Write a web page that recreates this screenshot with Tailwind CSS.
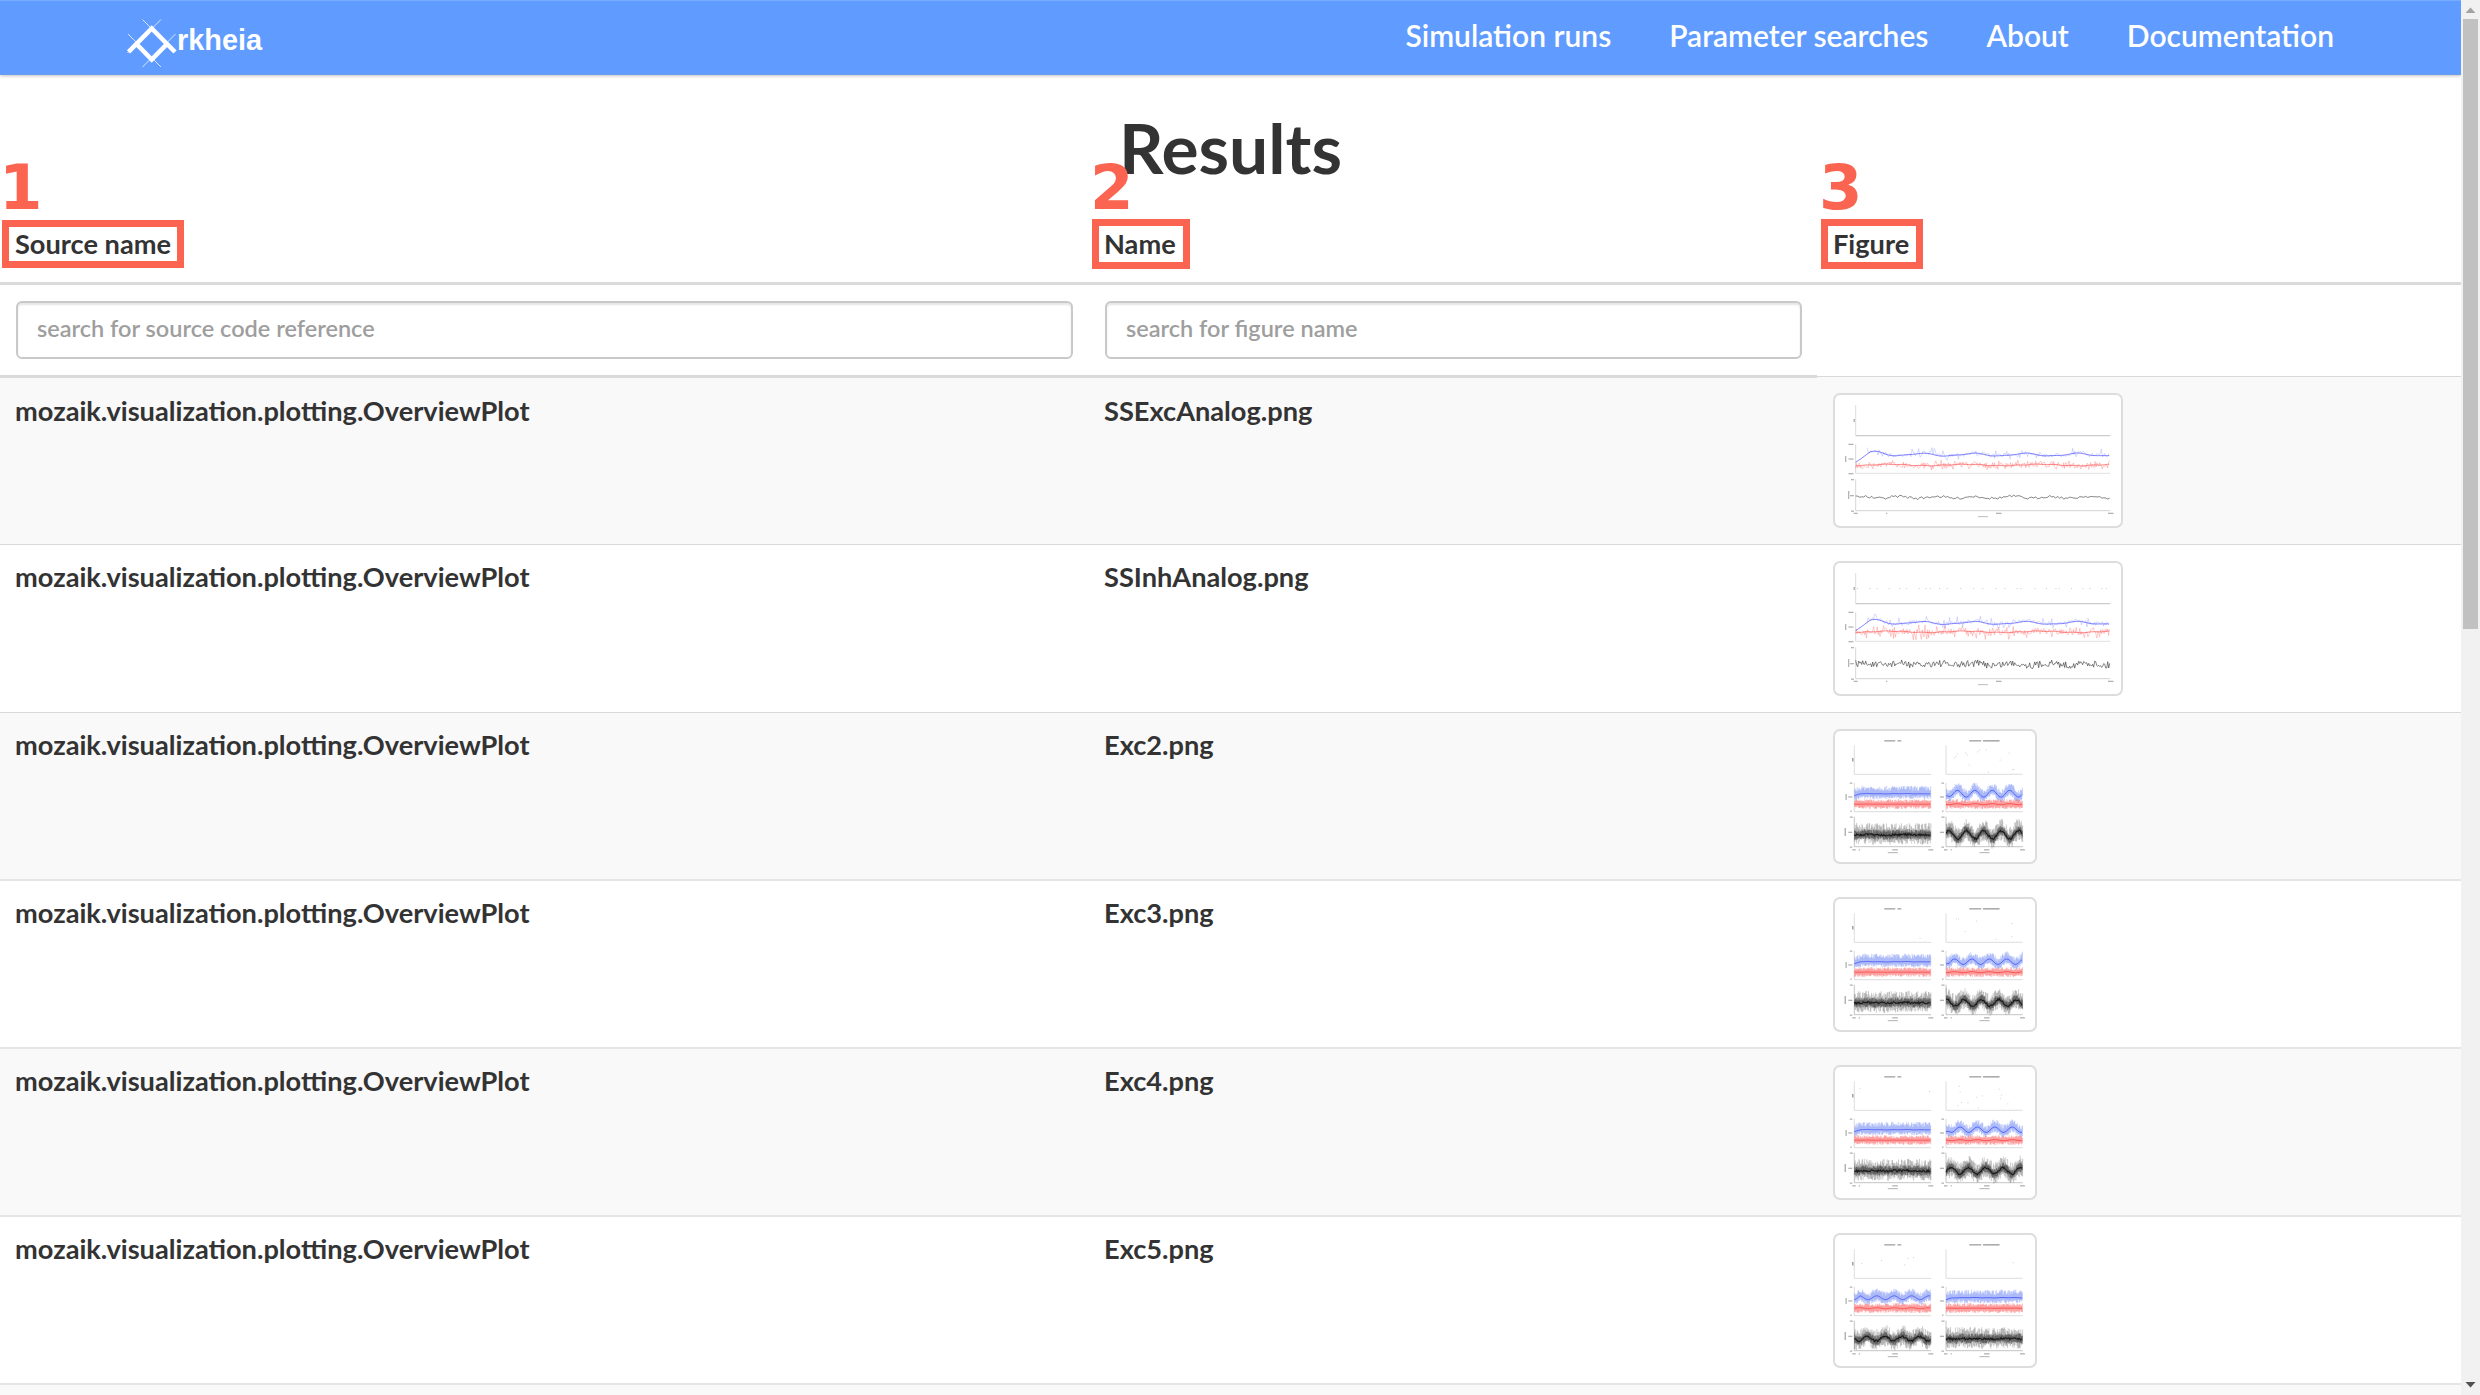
<!DOCTYPE html>
<html lang="en">
<head>
<meta charset="utf-8">
<title>Arkheia</title>
<script src="https://cdn.jsdelivr.net/npm/@tailwindcss/browser@4"></script>
</head>
<body class="h-[1395px] w-[2480px] overflow-hidden bg-white font-['Lato',sans-serif] text-[#333]">
<div class="flex h-full">
  <main class="h-full w-[2461px] overflow-hidden">
    <nav class="flex h-[75px] items-start justify-between border-y border-t-[#76abff] border-b-[#6a9bee] bg-[#609cff] pr-[127px] pl-[127px] text-white shadow-[0_1px_3px_rgba(0,0,0,0.25)]">
      <a class="flex items-start pt-[17px]">
        <svg class="h-[52px] w-[50px]" viewBox="0 0 50 52" fill="none" stroke="#fff">
          <path d="M15.500 1.500L45 31M34 1.500L.500 35M1 16L34 49M48.500 16L15.500 49" stroke-width="1" opacity=".75"/>
          <path d="M1.500 34L24.700 10.500L48 34M9.500 26L24.700 41.500L40 26" stroke-width="4.600"/>
        </svg>
        <span class="font-['Liberation_Sans',sans-serif] text-[28.900px] leading-[44px] font-bold">rkheia</span>
      </a>
      <div class="flex gap-[58px] pt-[14px] text-[30px] leading-[40px] font-semibold">
        <a>Simulation runs</a><a>Parameter searches</a><a>About</a><a>Documentation</a>
      </div>
    </nav>
    <h1 class="pt-8 text-center text-[69.500px] leading-[80px] font-bold">Results</h1>
    <div class="grid h-[98px] grid-cols-[1089px_728px_1fr] border-b-[3px] border-[#dadada] pt-[37px] text-[27.200px] leading-[40px] font-bold">
      <div class="relative pl-[15px]">Source name
        <span class="absolute top-[-4px] left-[2px] h-[48px] w-[182px] border-[7px] border-[#fa6450]"></span>
        <span class="absolute top-[-73px] left-[-1px] font-['DejaVu_Sans',sans-serif] text-[62.500px] leading-[74px] font-bold text-[#fa6450]">1</span>
      </div>
      <div class="relative pl-[15px]">Name
        <span class="absolute top-[-5px] left-[3px] h-[50px] w-[98px] border-[7px] border-[#fa6450]"></span>
        <span class="absolute top-[-73px] left-[1px] font-['DejaVu_Sans',sans-serif] text-[62.500px] leading-[74px] font-bold text-[#fa6450]">2</span>
      </div>
      <div class="relative pl-4">Figure
        <span class="absolute top-[-5px] left-[4px] h-[50px] w-[102px] border-[7px] border-[#fa6450]"></span>
        <span class="absolute top-[-73px] left-[2px] font-['DejaVu_Sans',sans-serif] text-[62.500px] leading-[74px] font-bold text-[#fa6450]">3</span>
      </div>
    </div>
    <div class="grid h-[91px] grid-cols-[1089px_728px_1fr] text-[23.500px] font-semibold">
      <div class="pt-4 pr-4 pl-4"><input class="h-[58px] w-full rounded-[6px] border-2 border-[#c9c9c9] px-[19px] pb-[5px] shadow-[inset_0_2px_2px_rgba(0,0,0,0.1)] placeholder:text-[#9e9e9e]" placeholder="search for source code reference"></div>
      <div class="pt-4 pr-[15px] pl-4"><input class="h-[58px] w-full rounded-[6px] border-2 border-[#c9c9c9] px-[19px] pb-[5px] shadow-[inset_0_2px_2px_rgba(0,0,0,0.1)] placeholder:text-[#9e9e9e]" placeholder="search for figure name"></div>
    </div>
    <div id="rows" class="relative text-[27.200px] leading-[40px] font-bold">
      <div class="absolute top-[-1px] left-0 h-[3px] w-[1817px] bg-[#dadada]"></div>
    </div>
  </main>
  <aside class="flex h-full w-[19px] flex-col items-center bg-[#f1f1f1]">
    <svg class="h-[19px] w-[19px]" viewBox="0 0 19 19"><path d="M4.500 13L9.500 7.500L14.500 13Z" fill="#a3a3a3"/></svg>
    <div class="h-[610px] w-[15px] bg-[#c1c1c1]"></div>
    <svg class="mt-auto h-[19px] w-[19px]" viewBox="0 0 19 19"><path d="M4.500 6L9.500 11.500L14.500 6Z" fill="#505050"/></svg>
  </aside>
</div>
<script>
let seed = 7;
const rnd = () => (seed = (seed * 16807) % 2147483647) / 2147483647;
const path = (d, c, w, o = 1) => `<path d="${d}" fill="none" stroke="${c}" stroke-width="${w}" opacity="${o}"/>`;
const dash = (x, y, w, h = 1.3, o = .4) => `<rect x="${x}" y="${y}" width="${w}" height="${h}" fill="#444" opacity="${o}"/>`;
const line = (x0, x1, step, f) => {
  let d = '';
  for (let x = x0; x <= x1; x += step) d += (d ? 'L' : 'M') + x.toFixed(1) + ' ' + f(x).toFixed(2);
  return d;
};
// vertical strokes around a mean curve
const bars = (x0, x1, step, f, up, down) => {
  let d = '';
  for (let x = x0; x <= x1; x += step) {
    const y = f(x);
    d += `M${x.toFixed(1)} ${(y - up * (.35 + .65 * rnd())).toFixed(1)}V${(y + down * (.35 + .65 * rnd())).toFixed(1)}`;
  }
  return d;
};

function wide(inh) {
  let s = path('M22.700 12V42.700', '#ddd', 1) + path('M22.700 42.700H277.300', '#ccc', 1.2)
    + path('M22.700 51.300V80.300', '#ccc', .8) + path('M22.700 80.300H277.300', '#e2e2e2', 1)
    + path('M22.700 86.300V117.700', '#ccc', .8) + path('M22.700 117.700H277.300', '#d4d4d4', 1);
  const rise = x => Math.max(0, 1 - (x - 22.7) / 15);
  const blue = x => (inh ? 62 : 61.7) + 8 * rise(x) ** 1.3 - 3.2 * Math.exp(-(((x - 41) / 11) ** 2))
    + 1.3 * Math.cos((x - 62) / 52 * 6.28) * Math.min(1, Math.max(0, (x - 45) / 20)) + .4 * Math.sin(x / 4);
  const red = x => (inh ? 70.8 : 72) + .7 * Math.sin(x / 12) + .3 * Math.sin(x / 3);
  s += path(line(34, 277, 1.1, x => blue(x) + (rnd() - .6) * (rnd() > .8 ? 11 : 4)), '#6a7cff', .6, .45);
  s += path(line(22.7, 277, .9, x => red(x) + (rnd() - .5) * (rnd() > .7 ? (inh ? 15 : 10) : 6)), '#ff6060', .6, .55);
  s += path(line(22.7, 277, 1.5, blue), '#5555fa', .9, .85) + path(line(22.7, 277, 1.5, red), '#fb5858', .9, .85);
  s += path(line(22.7, 277, inh ? 1 : 2, x => (inh ? 103.2 : 104.3) + 1 * Math.sin(x / 6) + (rnd() - .5) * (inh ? 7 : 2.5)), '#333', .8, .75);
  if (inh) for (let x = 24; x < 277; x += 3 + rnd() * 11) s += dash(x, 27, 1, .8, .35);
  s += dash(20.5, 26, 1.5, 3) + dash(15.5, 50.7, 5) + dash(15.5, 65.4, 5) + dash(15.5, 80, 5)
    + dash(18, 86, 3) + dash(17, 102, 4) + dash(18, 117.5, 3)
    + dash(12, 63, 1.3, 6) + dash(15, 98, 1.3, 8) + dash(20.700, 119.7, 4) + dash(53, 119.7, 1.3)
    + dash(163, 119.7, 5.500) + dash(275, 119.7, 5.500) + dash(145, 123, 10, 1.2, .3);
  return s;
}

function pair(l, r) {
  let s = dash(51.3, 11.2, 11, 1.3, .5) + dash(64.5, 11.2, 3.8, 1.3, .5) + dash(136.3, 11.2, 12, 1.3, .5) + dash(150, 11.2, 16.500, 1.3, .55);
  [[21.3, l], [113, r]].forEach(([x0, p]) => {
    const x1 = x0 + 76.7;
    s += path(`M${x0} 16.300V45.300H${x1}`, '#d8d8d8', .9) + path(`M${x0} 54V82.700H${x1}`, '#d0d0d0', .8) + path(`M${x0} 87.700V117.700H${x1}`, '#b4b4b4', .8);
    const wave = (peak, x) => p.amp ? Math.cos((x - x0 - peak) / 17.4 * 6.283) : .25 * Math.sin(x / 3.1) * Math.sin(x / 7);
    const early = x => Math.max(0, 1 - (x - x0) / 6);
    const blue = x => 64.7 - (p.amp || 1) * wave(p.b, x) * (1 - early(x)) + 2 * early(x);
    const red = x => 75.2 - .5 * wave(p.b, x);
    const black = x => 105.8 - (p.amp ? p.amp * 1.2 : 1.5) * wave(p.k, x);
    s += path(bars(x0 + .4, x1, .5, blue, 8, 5.5), '#6b86f5', .55, .65);
    s += path(bars(x0 + .4, x1, .5, x => 75.2, 5, 4.8), '#fa6a6a', .55, .8);
    s += path(bars(x0 + .4, x1, .6, black, 12, 10), '#333', .45, .55) + path(bars(x0 + .4, x1, .5, black, 5.500, 5), '#222', .5, .7);
    s += path(line(x0, x1, 1, blue), '#3f50fa', 1, .8) + path(line(x0, x1, 1, red), '#fb4242', 1, .8)
      + path(line(x0, x1, .8, x => black(x) + (rnd() - .5) * 2), '#111', 1.1, .9);
    for (let i = 0; i < p.dots; i++) s += dash(x0 + 5 + rnd() * 70, 19 + rnd() * 25, .9, .9, .3);
    s += dash(x0 - 4.500, 53.500, 2.500) + dash(x0 - 6, 67.300, 4) + dash(x0 - 4, 81.500, 1.500) + dash(x0 - 4.500, 87.500, 3)
      + dash(x0 - 6, 102.700, 4) + dash(x0 - 4.500, 117.500, 2.500)
      + dash(x0 - 2, 120.200, 3.500) + dash(x0 + 4.500, 120.200, 1.300) + dash(x0 + 38, 120.200, 5.500) + dash(x0 + 74, 120.200, 5) + dash(x0 + 33.500, 123, 10, 1.2, .35);
  });
  return s + dash(19, 29, 1.500, 3.500, .5) + dash(12.500, 65, 1.300, 6) + dash(11.500, 99, 1.500, 8);
}

const flat = (dots = 0) => ({ amp: 0, b: 0, k: 0, dots });
const rows = [
  ['SSExcAnalog.png', 290, () => wide(false)],
  ['SSInhAnalog.png', 290, () => wide(true)],
  ['Exc2.png', 203.5, () => pair(flat(), { amp: 3.4, b: 11.5, k: 3, dots: 14 })],
  ['Exc3.png', 203.5, () => pair(flat(1), { amp: 2.7, b: 8.5, k: 18, dots: 7 })],
  ['Exc4.png', 203.5, () => pair(flat(2), { amp: 2.7, b: 14, k: 5, dots: 12 })],
  ['Exc5.png', 203.5, () => pair({ amp: 1.9, b: 5, k: 13, dots: 5 }, flat(1))],
  ['', 0, null],
];
document.getElementById('rows').insertAdjacentHTML('afterbegin', rows.map(([name, w, draw], i) => `
  <div class="grid ${i === 2 ? 'h-[167px]' : 'h-[168px]'} grid-cols-[1089px_728px_1fr] ${i > 2 ? 'border-t-2 border-[#e5e5e5]' : 'border-t border-[#d9d9d9]'} ${i % 2 ? 'bg-white' : 'bg-[#f9f9f9]'}">
    ${draw ? `<div class="${i ? 'pt-3' : 'pt-3.5'} pl-[15px]">mozaik.visualization.plotting.OverviewPlot</div>
    <div class="${i ? 'pt-3' : 'pt-3.5'} pl-[15px]">${name}</div>
    <div class="pt-4 pl-4"><div class="h-[135px] rounded-[7px] border-2 border-[#ddd] bg-white" style="width:${w}px">
      <svg class="-mt-0.5 -ml-0.5 block overflow-visible" width="${w}" height="134" viewBox="0 0 ${w} 134">${draw()}</svg></div></div>` : ''}
  </div>`).join(''));
</script>
</body>
</html>
